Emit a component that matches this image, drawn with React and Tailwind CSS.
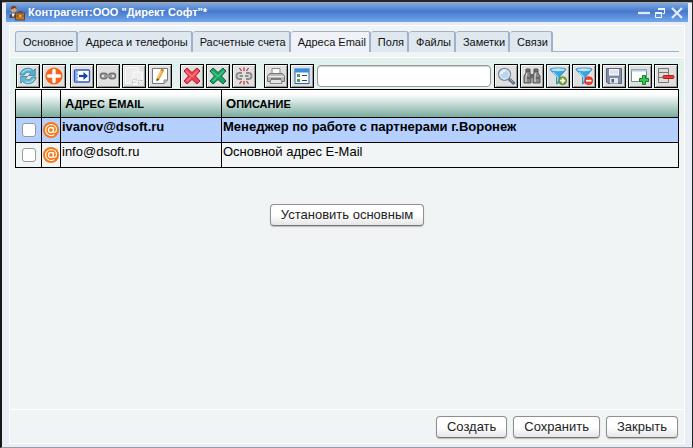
import React from "react";

const Svg = ({ children, size = 20 }) => (
  <svg width={size} height={size} viewBox="0 0 20 20" fill="none" aria-hidden="true" className="shrink-0">
    {children}
  </svg>
);

const RefreshIcon = () => (
  <Svg>
    <path d="M2 9C2.500 4.500 6.500 2 10.500 2.300C12.800 2.500 14.200 3.500 15.200 4.600L17.300 2.800V9.500H10.500L12.700 7.200C10.500 5.500 7.500 6 6.200 9Z" fill="#4db3d3" stroke="#3a8299" strokeWidth=".8" />
    <path d="M18 11C17.500 15.500 13.500 18 9.500 17.700C7.200 17.500 5.800 16.500 4.800 15.400L2.700 17.200V10.500H9.500L7.300 12.800C9.500 14.500 12.500 14 13.800 11Z" fill="#5fbbd6" stroke="#3a8299" strokeWidth=".8" />
    <path d="M4 7.500C5.500 4.500 9 3 12.500 4M16 12.700C14.500 15.500 11 17 7.500 16" stroke="#b5e4f0" strokeWidth="1.200" />
  </Svg>
);
const AddIcon = () => (
  <Svg>
    <circle cx="10" cy="10" r="8.600" fill="#f4661d" />
    <path d="M10 4.500V15.500M4.500 10H15.500" stroke="#fff" strokeWidth="3.400" strokeLinecap="round" />
  </Svg>
);
const MoveIcon = () => (
  <Svg>
    <rect x="2.500" y="4" width="15" height="12" rx="1" fill="#fff" stroke="#2f5bb8" strokeWidth="1.400" />
    <path d="M3 4.500H6V15.500H3Z" fill="#7ca4e6" />
    <path d="M4.500 7H6M4.500 10H6M4.500 13H6" stroke="#fff" />
    <path d="M7 10H14" stroke="#1743a7" strokeWidth="2.200" />
    <path d="M11.500 6L16 10L11.500 14Z" fill="#1743a7" />
  </Svg>
);
const LinkIcon = () => (
  <Svg>
    <rect x="2.500" y="7.500" width="6.500" height="5" rx="2.500" stroke="#777" strokeWidth="1.800" />
    <rect x="11" y="7.500" width="6.500" height="5" rx="2.500" stroke="#777" strokeWidth="1.800" />
    <path d="M6 10H14" stroke="#666" strokeWidth="2.200" />
    <path d="M6 10H14" stroke="#ddd" strokeWidth=".9" />
  </Svg>
);
const CopyIcon = () => (
  <Svg>
    <path d="M1.500 1.500H14.500V14.500L11.500 17.500H1.500Z" fill="#ebebeb" stroke="#f8f8f8" />
    <path d="M9 6H18.500V15.500L15.500 18.500H9Z" fill="#efefef" stroke="#fbfbfb" />
    <path d="M8 17.500L9 13.500L12.500 13V14.500Z" fill="#fff" stroke="#c2c2c2" strokeWidth=".8" />
    <path d="M14.500 18.500V14.500H18.500Z" fill="#fff" stroke="#bdbdbd" strokeWidth=".8" />
  </Svg>
);
const EditIcon = () => (
  <Svg>
    <path d="M2.500 2.500H17.500V14L14 17.500H2.500Z" fill="#fff" stroke="#777" />
    <path d="M14 17.500V14H17.500Z" fill="#ddd" stroke="#888" />
    <path d="M8 13L12.500 4" stroke="#f5a623" strokeWidth="3" />
    <path d="M8 12L12 3.700" stroke="#ffd36b" />
    <path d="M12 5L12.700 3.300" stroke="#c07a48" strokeWidth="3" />
    <path d="M6.500 15.500L6.600 12.300L9.300 13.500Z" fill="#444" />
  </Svg>
);
const CrossIcon = ({ fill, stroke, shine }) => (
  <Svg>
    <path d="M2 5L5 2L10 6.500L15 2L18 5L13.500 10L18 15L15 18L10 13.500L5 18L2 15L6.500 10Z" fill={fill} stroke={stroke} strokeLinejoin="round" />
    <path d="M4 5.200L10 10.500L15.500 5M5 15L8.500 11.500" stroke={shine} strokeWidth="1.300" opacity=".7" />
  </Svg>
);
const UnlinkIcon = () => (
  <Svg>
    <path d="M8 7H5.500A3 3 0 0 0 5.500 13H8M12 7H14.500A3 3 0 0 1 14.500 13H12M5.500 10H9M11 10H14.500" stroke="#8d8d8d" strokeWidth="2" />
    <path d="M10 1.500V5M5.500 2L7.500 5M14.500 2L12.500 5M10 15V18.500M5.500 18L7.500 15M14.500 18L12.500 15" stroke="#c8333f" strokeWidth="1.300" />
  </Svg>
);
const PrintIcon = () => (
  <Svg>
    <path d="M6 9V2.500H14V9" fill="#f7f7f7" stroke="#8a8a8a" />
    <path d="M3.500 7.500H16.500L18.500 10V15.500H1.500V10Z" fill="#b9b9b9" stroke="#777" />
    <path d="M2 10.500H18" stroke="#eee" />
    <path d="M5 13H15L16 17.500H4Z" fill="#e5e5e5" stroke="#888" />
    <path d="M5 13H15" stroke="#666" strokeWidth="1.400" />
  </Svg>
);
const FormIcon = () => (
  <Svg>
    <rect x="3" y="3" width="14" height="14.500" fill="#fff" stroke="#2465b5" />
    <path d="M3 3H17V6.500H3Z" fill="#358fe0" />
    <path d="M5 8H8V11H5ZM5 13H8V16H5Z" fill="#4f9e4a" />
    <path d="M10 9.500H15M10 14.500H15" stroke="#444" />
  </Svg>
);
const SearchIcon = () => (
  <Svg>
    <path d="M13 13L17.500 17" stroke="#647083" strokeWidth="3.200" strokeLinecap="round" />
    <path d="M13.500 13L17 16" stroke="#9fb9d8" />
    <circle cx="8.500" cy="8.300" r="6" fill="#b8d6f2" stroke="#7f8b9a" strokeWidth="1.300" />
    <circle cx="8.500" cy="8.300" r="4.700" stroke="#e8f4ff" />
    <path d="M5.500 8A3.200 3.200 0 0 1 9 5" stroke="#fff" strokeWidth="1.400" />
  </Svg>
);
const BinocularsIcon = () => (
  <Svg>
    <path d="M4 3H8V7L9 9V17H2V10L4 7ZM12 3H16V7L18 10V17H11V9L12 7Z" fill="#858585" stroke="#555" />
    <path d="M8 8H12V12H8Z" fill="#666" />
    <path d="M4 5H8M12 5H16M3 12H8M12 12H17" stroke="#444" />
    <path d="M5 7L4 11V16M13.500 7L13 11V16" stroke="#d0d0d0" strokeWidth="1.400" />
  </Svg>
);
const FilterIcon = ({ remove }) => (
  <Svg>
    <path d="M2 3.500C2 1.500 18 1.500 18 3.500L12 10.500V16L8.500 18V10.500Z" fill="#39a6e4" stroke="#2a7fb6" strokeWidth=".8" />
    <ellipse cx="10" cy="3.800" rx="7" ry="1.500" fill="#bfe5fa" />
    <path d="M5 6L9.800 11V15.500" stroke="#9edaf8" strokeWidth="1.300" />
    <circle cx="14.700" cy="14.700" r="4" fill={remove ? "#ef3f2f" : "#79a82b"} stroke={remove ? "#c22b20" : "#557c19"} strokeWidth=".7" />
    <path d={remove ? "M12 14.700H17.400" : "M12.200 14.700H17.200M14.700 12.200V17.200"} stroke="#fff" strokeWidth="1.700" />
  </Svg>
);
const SaveIcon = () => (
  <Svg>
    <path d="M2.500 2.500H17.500V17.500H4L2.500 16Z" fill="#7f8ca8" stroke="#5b6780" />
    <path d="M5 3H15V9.500H5Z" fill="#f5f7fb" />
    <path d="M6 5H14M6 7H14" stroke="#c7cfdf" />
    <path d="M6 12H14V17.500H6Z" fill="#e4e7ed" />
    <path d="M7.500 13H10V16.500H7.500Z" fill="#56627b" />
  </Svg>
);
const NewWindowIcon = () => (
  <Svg>
    <path d="M1.500 3.500H16.500V15.500H1.500Z" fill="#fff" stroke="#6f8b94" />
    <path d="M1.500 3.500H16.500V5.500H1.500Z" fill="#b5cdd4" />
    <path d="M12.500 9.500H15.500V12.500H18.500V15.500H15.500V18.500H12.500V15.500H9.500V12.500H12.500Z" fill="#36c84b" stroke="#168229" />
  </Svg>
);
const RemoveRowIcon = () => (
  <Svg>
    <path d="M2.500 2.500H12.500V6.500H2.500ZM2.500 6.500H12.500V11.500H2.500ZM2.500 11.500H12.500V16.500H2.500Z" fill="#ddd" stroke="#777" strokeLinejoin="round" />
    <path d="M8.500 11H16.500" stroke="#961c14" strokeWidth="4" strokeLinecap="round" />
    <path d="M8.500 11H16.500" stroke="#f13527" strokeWidth="2.600" strokeLinecap="round" />
  </Svg>
);
const ContactIcon = () => (
  <svg width="16" height="16" viewBox="0 0 16 16" aria-hidden="true" className="shrink-0">
    <path d="M0.500 13V10.500L3 8H7L9.500 10.500V13Z" fill="#4e4941" />
    <path d="M2.500 8.500L4 12.500L6 8.500Z" fill="#fff" />
    <circle cx="4.700" cy="4.300" r="3" fill="#d7a078" />
    <path d="M1.700 4.500C1.500 -0.300 7.800 -0.300 7.700 4.300L6 3Z" fill="#6b4428" />
    <path d="M9.500 8V6.700H13V8" fill="none" stroke="#6d3f18" />
    <rect x="6.500" y="8" width="9" height="7" fill="#b8772d" stroke="#71421a" />
    <path d="M7 11H15" stroke="#7c4b1e" />
    <path d="M10.300 10H12.300V12H10.300Z" fill="#f4c552" />
  </svg>
);

const TABS = ["Основное", "Адреса и телефоны", "Расчетные счета", "Адреса Email", "Поля", "Файлы", "Заметки", "Связи"];

const ROWS = [
  { email: "ivanov@dsoft.ru", description: "Менеджер по работе с партнерами г.Воронеж", main: true },
  { email: "info@dsoft.ru", description: "Основной адрес E-Mail", main: false },
];

const ToolButton = ({ label, children }) => (
  <button
    type="button"
    aria-label={label}
    className="flex size-6 shrink-0 items-center justify-center border border-black bg-[#e0e0e0] shadow-[inset_1px_1px_0_#f8f8f8,inset_-1px_-1px_0_#999]"
  >
    {children}
  </button>
);

const PushButton = ({ children }) => (
  <button
    type="button"
    className="h-[22px] rounded-[4px] border border-[#8f8f8f] border-b-[#777] bg-linear-to-b from-white from-50% to-[#e6e6e6] px-2.5 text-[13px] leading-5 text-[#222] shadow-[0_1px_1px_#bbb]"
  >
    {children}
  </button>
);

function TitleBar() {
  return (
    <header className="mx-1 flex h-[19px] items-center bg-linear-to-b from-[#7fa9e4] via-[#4679cb] via-45% to-[#74a7ee] pr-1 pl-[3px]">
      <ContactIcon />
      <h1 className="ml-[3px] flex-1 pb-0.5 text-[11px] leading-4 font-bold text-white">Контрагент:ООО "Директ Софт"*</h1>
      <div className="flex items-center gap-1">
        <button type="button" aria-label="Свернуть">
          <svg width="12" height="12" viewBox="0 0 12 12"><path d="M0 6H12" stroke="#dfe8fa" strokeWidth="2.400" /></svg>
        </button>
        <button type="button" aria-label="Восстановить">
          <svg width="12" height="12" viewBox="0 0 12 12" fill="none" stroke="#eefaff">
            <path d="M4.500 3V1.500H10.500V6.500H8.500" /><path d="M4 2H11" strokeWidth="2" />
            <path d="M1.500 5.500H7.500V10.500H1.500Z" fill="#5c91d7" /><path d="M1 6H8" strokeWidth="2" />
          </svg>
        </button>
        <button type="button" aria-label="Закрыть окно">
          <svg width="14" height="12" viewBox="0 0 14 12"><path d="M2 1L12 11M12 1L2 11" stroke="#e3ebfa" strokeWidth="2.200" /></svg>
        </button>
      </div>
    </header>
  );
}

function Tabs() {
  return (
    <div role="tablist" className="flex p-[5px]">
      {TABS.map((tab, i) => (
        <button
          key={tab}
          type="button"
          role="tab"
          aria-selected={i === 3}
          className={`h-[21px] shrink-0 rounded-t-[3px] border-t border-r-2 border-[#a3b0cc] pr-[3px] pl-[7px] text-[11px] leading-5 text-[#111] ${
            i === 0 ? "border-b border-l" : ""
          } ${i === 3 ? "bg-[#eff2f8]" : "bg-[#dfe8ef]"}`}
        >
          {tab}
        </button>
      ))}
      <div className="h-[21px] flex-1 border-b border-[#a3b0cc]" />
    </div>
  );
}

function Toolbar() {
  return (
    <div role="toolbar" aria-label="Адреса" className="flex items-center px-px pb-px">
      <div className="flex gap-0.5">
        <ToolButton label="Обновить"><RefreshIcon /></ToolButton>
        <ToolButton label="Добавить"><AddIcon /></ToolButton>
      </div>
      <div className="ml-1 flex gap-0.5">
        <ToolButton label="Переместить"><MoveIcon /></ToolButton>
        <ToolButton label="Связать"><LinkIcon /></ToolButton>
        <ToolButton label="Копировать"><CopyIcon /></ToolButton>
        <ToolButton label="Редактировать"><EditIcon /></ToolButton>
      </div>
      <div className="ml-2 flex gap-0.5">
        <ToolButton label="Удалить"><CrossIcon fill="#ef3f4c" stroke="#b51f2d" shine="#ff9ba1" /></ToolButton>
        <ToolButton label="Исключить"><CrossIcon fill="#17a565" stroke="#076139" shine="#67d39e" /></ToolButton>
        <ToolButton label="Разорвать связь"><UnlinkIcon /></ToolButton>
      </div>
      <div className="ml-2 flex gap-0.5">
        <ToolButton label="Печать"><PrintIcon /></ToolButton>
        <ToolButton label="Форма"><FormIcon /></ToolButton>
      </div>
      <input
        type="text"
        aria-label="Поиск"
        className="mx-[3px] h-[22px] min-w-0 flex-1 rounded-[4px] border border-[#999] bg-white px-1 text-[13px] shadow-[inset_0_1px_1px_#ccc]"
      />
      <div className="flex gap-0.5">
        <ToolButton label="Найти"><SearchIcon /></ToolButton>
        <ToolButton label="Расширенный поиск"><BinocularsIcon /></ToolButton>
        <ToolButton label="Добавить фильтр"><FilterIcon /></ToolButton>
        <ToolButton label="Снять фильтр"><FilterIcon remove /></ToolButton>
        <div className="h-6 w-0.5 bg-black" />
        <ToolButton label="Сохранить список"><SaveIcon /></ToolButton>
        <ToolButton label="Новое окно"><NewWindowIcon /></ToolButton>
        <ToolButton label="Удалить строку"><RemoveRowIcon /></ToolButton>
      </div>
    </div>
  );
}

const HeaderCell = ({ words }) => (
  <th scope="col" className="border border-black p-0 pl-1 font-bold">
    {words.map((word, i) => (
      <React.Fragment key={word}>
        {i > 0 && " "}
        <span className="inline-block text-[11px] uppercase first-letter:text-[13px]">{word}</span>
      </React.Fragment>
    ))}
  </th>
);

function EmailTable() {
  return (
    <table className="w-full table-fixed border-collapse border border-black text-[13px] leading-4 text-black">
      <colgroup>
        <col className="w-[26px]" />
        <col className="w-[19px]" />
        <col className="w-[161px]" />
        <col />
      </colgroup>
      <thead>
        <tr className="h-7 bg-linear-to-b from-white from-15% to-[#73a99c] text-left">
          <td className="border border-black" />
          <td className="border border-black" />
          <HeaderCell words={["Адрес", "Email"]} />
          <HeaderCell words={["Описание"]} />
        </tr>
      </thead>
      <tbody>
        {ROWS.map((row) => (
          <tr key={row.email} className={`h-[25px] ${row.main ? "bg-[#b5d0ff] font-bold" : "bg-[#f2f5f5]"}`}>
            <td className="border border-black p-0">
              <input
                type="checkbox"
                aria-label={row.email}
                className="mx-auto block size-3.5 appearance-none rounded-[3px] border border-[#999] bg-white checked:bg-[#4679cb]"
              />
            </td>
            <td className="border border-black p-0">
              <svg width="16" height="16" viewBox="0 0 16 16" fill="none" aria-hidden="true" className="mx-auto block">
                <circle cx="8" cy="8" r="8" fill="#fb7512" />
                <circle cx="8" cy="8" r="2.500" stroke="#fff" strokeWidth="1.300" />
                <path d="M10.700 5.300L10.300 9.300C10.300 11 13.500 10.600 13.500 7.600C13.500 4.500 11 2.500 8 2.500A5.500 5.500 0 1 0 11.300 12.500" stroke="#fff" strokeWidth="1.200" />
              </svg>
            </td>
            <td className="border border-black p-0 pt-px pl-px align-top">{row.email}</td>
            <td className="border border-black p-0 pt-px pl-px align-top">{row.description}</td>
          </tr>
        ))}
      </tbody>
    </table>
  );
}

export default function App() {
  return (
    <div className="flex min-h-screen flex-col border-t-2 border-r border-b border-l-2 border-t-[#262626] border-r-[#222] border-b-[#999ba2] border-l-[#181818] bg-[#e9edf6] font-['Liberation_Sans',Arial,sans-serif]">
      <div className="h-px bg-[#aaa]" />
      <TitleBar />
      <main className="mx-[7px] my-[3px] flex flex-1 flex-col border border-white bg-[#f0f4f4]">
        <Tabs />
        <section className="flex-1 border-y border-white">
          <div className="bg-linear-to-b from-[#e1f2ee] from-5% to-[#f0f4f4] to-70% px-[5px] pt-1.5">
            <Toolbar />
            <EmailTable />
          </div>
          <div className="flex justify-center pt-9">
            <PushButton>Установить основным</PushButton>
          </div>
        </section>
        <footer className="flex justify-end gap-1.5 px-1.5 pt-1.5 pb-[5px]">
          <PushButton>Создать</PushButton>
          <PushButton>Сохранить</PushButton>
          <PushButton>Закрыть</PushButton>
        </footer>
      </main>
    </div>
  );
}
